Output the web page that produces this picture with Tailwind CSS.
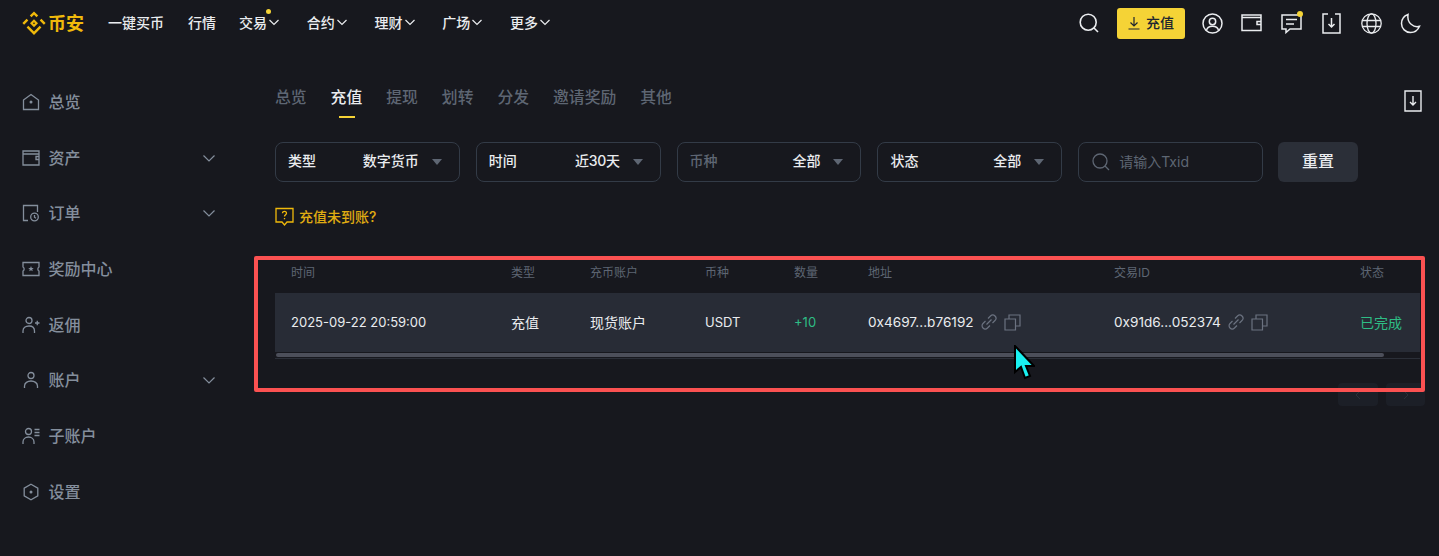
<!DOCTYPE html>
<html lang="zh-CN">
<head>
<meta charset="utf-8">
<title>充值记录</title>
<script src="https://cdn.jsdelivr.net/npm/@tailwindcss/browser@4"></script>
</head>
<body class="bg-[#17181e] font-['Inter','Noto_Sans_CJK_SC',sans-serif] overflow-hidden">
<div class="relative w-[1439px] h-[556px] overflow-hidden text-[#eaecef]">
  <!-- Header -->
  <header class="h-[46px] flex items-center pl-[22px] pr-[18px] text-[14px] font-medium">
    <div class="flex items-center w-[86px] shrink-0">
      <svg class="w-[24px] h-[24px]" viewBox="0 0 24 24" fill="#f0b90b"><path d="M12 0l4.200 4.200-1.700 1.700L12 3.400 9.500 5.900 7.800 4.200zM19.400 7.400L23.600 11.600 21.900 13.300 17.700 9.100zM4.600 7.400l1.700 1.700-4.200 4.200L.4 11.600zM12 7.800l4 4-4 4-4-4zm0 3l-1 1 1 1 1-1zM6.300 14.400l5.700 5.700 5.700-5.700 1.700 1.700L12 23.500l-7.400-7.400z" transform="translate(0 .4)"/></svg>
      <span class="ml-[2px] mt-[1px] text-[18px] font-bold text-[#f0b90b]">币安</span>
    </div>
    <nav class="flex items-center gap-[24px] mt-[-2px]">
      <a>一键买币</a><a class="mr-[-1px]">行情</a>
      <a class="relative flex items-center pr-[1.750px]">交易<svg class="w-[14px] h-[14px]" viewBox="0 0 14 14" fill="none" stroke="currentColor" stroke-width="1.200"><path d="M2.500 5l4.500 4.500L11.500 5"/></svg><span class="absolute left-[27px] top-[-3px] w-[5px] h-[5px] rounded-full bg-[#f5d336]"></span></a>
      <a class="flex items-center pr-[1.750px]">合约<svg class="w-[14px] h-[14px]" viewBox="0 0 14 14" fill="none" stroke="currentColor" stroke-width="1.200"><path d="M2.500 5l4.500 4.500L11.500 5"/></svg></a>
      <a class="flex items-center pr-[1.750px]">理财<svg class="w-[14px] h-[14px]" viewBox="0 0 14 14" fill="none" stroke="currentColor" stroke-width="1.200"><path d="M2.500 5l4.500 4.500L11.500 5"/></svg></a>
      <a class="flex items-center pr-[1.750px]">广场<svg class="w-[14px] h-[14px]" viewBox="0 0 14 14" fill="none" stroke="currentColor" stroke-width="1.200"><path d="M2.500 5l4.500 4.500L11.500 5"/></svg></a>
      <a class="flex items-center">更多<svg class="w-[14px] h-[14px]" viewBox="0 0 14 14" fill="none" stroke="currentColor" stroke-width="1.200"><path d="M2.500 5l4.500 4.500L11.500 5"/></svg></a>
    </nav>
    <div class="ml-auto flex items-center">
      <svg class="w-[20px] h-[20px]" viewBox="0 0 20 20" fill="none" stroke="#eaecef" stroke-width="1.600"><circle cx="9.200" cy="9.200" r="8"/><path d="M15 15l4 4"/></svg>
      <button class="ml-[18px] w-[68px] h-[31px] rounded-[3px] bg-[#f5d336] text-[#202630] text-[14px] font-medium flex items-center justify-center gap-[6px] pb-[1px]">
        <svg class="w-[12px] h-[14px]" viewBox="0 0 12 14" fill="none" stroke="#202630" stroke-width="1.200"><path d="M6 1v9M2.500 6.500L6 10l3.500-3.500M.5 13h11"/></svg>充值
      </button>
      <svg class="ml-[17px] w-[21px] h-[21px]" viewBox="0 0 21 21" fill="none" stroke="#eaecef" stroke-width="1.500"><circle cx="10.500" cy="10.500" r="9.500"/><circle cx="10.500" cy="8.500" r="3.200"/><path d="M4.500 17.500c.5-3 3-4.300 6-4.300s5.500 1.300 6 4.300"/></svg>
      <svg class="ml-[18px] w-[21px] h-[18px]" viewBox="0 0 21 18" fill="none" stroke="#eaecef" stroke-width="1.500"><path d="M1 3.500V16.500H20V1H1V3.500H20"/><path d="M20 7.500h-4v3h4" /></svg>
      <div class="relative ml-[19px] w-[21px] h-[21px]">
        <svg class="w-[21px] h-[21px]" viewBox="0 0 21 21" fill="none" stroke="#eaecef" stroke-width="1.500"><path d="M1 2h19v14h-11l-4 3.500V16H1zM5 6.500h11M5 11h8"/></svg>
        <span class="absolute right-[-1px] top-[-2px] w-[6px] h-[6px] rounded-full bg-[#f5d336]"></span>
      </div>
      <svg class="ml-[20px] w-[19px] h-[21px]" viewBox="0 0 19 21" fill="none" stroke="#eaecef" stroke-width="1.500"><path d="M6 1H1v19h17V1h-5M9.500 5v9M6.500 11l3 3 3-3"/></svg>
      <svg class="ml-[20px] w-[21px] h-[21px]" viewBox="0 0 21 21" fill="none" stroke="#eaecef" stroke-width="1.300"><circle cx="10.500" cy="10.500" r="9.700"/><ellipse cx="10.500" cy="10.500" rx="4.500" ry="9.700"/><path d="M1.500 7.500h18M1.500 13.500h18"/></svg>
      <svg class="ml-[18px] w-[21px] h-[21px]" viewBox="0 0 21 21" fill="none" stroke="#eaecef" stroke-width="1.500"><path d="M8 1.500C4 3 1.500 6.500 1.500 10.500c0 5 4 9 9 9 4 0 7.500-2.500 9-6.200-5.500 1.500-13-3-11.500-11.800z"/></svg>
    </div>
  </header>

  <div class="flex">
    <!-- Sidebar -->
    <aside class="w-[275px] shrink-0 pt-[28px] pl-[22px] pr-[59px] text-[16px] font-medium text-[#848e9c]">
      <div class="h-[55.700px] flex items-center"><svg class="w-[18px] h-[18px] mr-[8.500px]" viewBox="0 0 18 18" fill="none" stroke="currentColor" stroke-width="1.300"><path d="M1.500 7L9 1.500 16.500 7V16.500H1.500z"/><circle cx="9" cy="9" r="1.500" fill="currentColor" stroke="none"/></svg>总览</div>
      <div class="h-[55.700px] flex items-center"><svg class="w-[18px] h-[18px] mr-[8.500px]" viewBox="0 0 18 18" fill="none" stroke="currentColor" stroke-width="1.300"><path d="M1 3v13h16V2H1v3h16M17 7.500h-3v3h3"/></svg>资产<svg class="ml-auto w-[14px] h-[14px]" viewBox="0 0 14 14" fill="none" stroke="currentColor" stroke-width="1.200"><path d="M1.500 4.500L7 10l5.500-5.500"/></svg></div>
      <div class="h-[55.700px] flex items-center"><svg class="w-[18px] h-[18px] mr-[8.500px]" viewBox="0 0 18 18" fill="none" stroke="currentColor" stroke-width="1.300"><path d="M6 16.500H1.500V1.500H15.500V8"/><circle cx="12.500" cy="13" r="3.800"/><path d="M12.500 11v2.200l1.500 1"/></svg>订单<svg class="ml-auto w-[14px] h-[14px]" viewBox="0 0 14 14" fill="none" stroke="currentColor" stroke-width="1.200"><path d="M1.500 4.500L7 10l5.500-5.500"/></svg></div>
      <div class="h-[55.700px] flex items-center"><svg class="w-[18px] h-[18px] mr-[8.500px]" viewBox="0 0 18 18" fill="none" stroke="currentColor" stroke-width="1.300"><path d="M1 2.500h16V7c-1.500.5-1.500 3.500 0 4v4.500H1V11c1.500-.5 1.500-3.500 0-4z"/><path d="M9 6l.8 2h2l-1.600 1.300.6 2L9 10.200l-1.800 1.100.6-2L6.200 8h2z" fill="currentColor" stroke="none"/></svg>奖励中心</div>
      <div class="h-[55.700px] flex items-center"><svg class="w-[18px] h-[18px] mr-[8.500px]" viewBox="0 0 18 18" fill="none" stroke="currentColor" stroke-width="1.300"><circle cx="7" cy="4.500" r="3"/><path d="M1 17v-2c0-3 2.500-5 6-5s5.500 2 5.500 5v2M13 7h4.500M15.250 4.800v4.400"/></svg>返佣</div>
      <div class="h-[55.700px] flex items-center"><svg class="w-[18px] h-[18px] mr-[8.500px]" viewBox="0 0 18 18" fill="none" stroke="currentColor" stroke-width="1.300"><circle cx="9" cy="4.500" r="3"/><path d="M2.500 17v-2c0-3 3-5 6.500-5s6.500 2 6.500 5v2"/></svg>账户<svg class="ml-auto w-[14px] h-[14px]" viewBox="0 0 14 14" fill="none" stroke="currentColor" stroke-width="1.200"><path d="M1.500 4.500L7 10l5.500-5.500"/></svg></div>
      <div class="h-[55.700px] flex items-center"><svg class="w-[18px] h-[18px] mr-[8.500px]" viewBox="0 0 18 18" fill="none" stroke="currentColor" stroke-width="1.300"><circle cx="6.500" cy="4.500" r="3"/><path d="M1 17v-2c0-3 2.500-5 5.500-5s5.500 2 5.500 5v2M12.500 2.500h5M12.500 5.500h5M12.500 8.500h5"/></svg>子账户</div>
      <div class="h-[55.700px] flex items-center"><svg class="w-[18px] h-[18px] mr-[8.500px]" viewBox="0 0 18 18" fill="none" stroke="currentColor" stroke-width="1.300"><path d="M9 1.200l6.800 3.900v7.800L9 16.800l-6.800-3.900V5.100z"/><circle cx="9" cy="9" r="1.500" fill="currentColor" stroke="none"/></svg>设置</div>
    </aside>

    <!-- Main -->
    <main class="flex-1 min-w-0 pr-[19px]">
      <div class="relative flex items-start gap-[24px] pt-[40px] h-[96px] text-[15.800px] font-medium text-[#5e6673]">
        <span>总览</span>
        <span class="relative text-[#eaecef]">充值<span class="absolute left-[8px] top-[30px] w-[16px] h-[2px] bg-[#f5d336]"></span></span>
        <span>提现</span><span>划转</span><span>分发</span><span>邀请奖励</span><span>其他</span>
        <svg class="absolute right-[-2px] top-[44px] w-[18px] h-[22px]" viewBox="0 0 18 22" fill="none" stroke="#eaecef" stroke-width="1.400"><path d="M1 1h16v20H1zM9 6v9M6 12l3 3 3-3"/></svg>
      </div>
      <div class="flex items-center gap-[16px] text-[14px] font-medium">
        <div class="w-[184.800px] h-[40px] rounded-[8px] border border-[#333b47] flex items-center px-[12px] pb-[3px]"><span>类型</span><span class="ml-auto">数字货币</span><span class="ml-[13px] mr-[5px] mt-[3px] w-0 h-0 border-x-[5px] border-x-transparent border-t-[6px] border-t-[#5e6673]"></span></div>
        <div class="w-[184.800px] h-[40px] rounded-[8px] border border-[#333b47] flex items-center px-[12px] pb-[3px]"><span>时间</span><span class="ml-auto tracking-[-0.3px]">近30天</span><span class="ml-[13px] mr-[5px] mt-[3px] w-0 h-0 border-x-[5px] border-x-transparent border-t-[6px] border-t-[#5e6673]"></span></div>
        <div class="w-[184.800px] h-[40px] rounded-[8px] border border-[#333b47] flex items-center px-[12px] pb-[3px]"><span class="text-[#5e6673]">币种</span><span class="ml-auto">全部</span><span class="ml-[13px] mr-[5px] mt-[3px] w-0 h-0 border-x-[5px] border-x-transparent border-t-[6px] border-t-[#5e6673]"></span></div>
        <div class="w-[184.800px] h-[40px] rounded-[8px] border border-[#333b47] flex items-center px-[12px] pb-[3px]"><span>状态</span><span class="ml-auto">全部</span><span class="ml-[13px] mr-[5px] mt-[3px] w-0 h-0 border-x-[5px] border-x-transparent border-t-[6px] border-t-[#5e6673]"></span></div>
        <div class="w-[184.800px] h-[40px] rounded-[8px] border border-[#333b47] flex items-center px-[13px] text-[#5e6673] font-normal pb-[2px]"><svg class="w-[18px] h-[18px] mr-[9px] mt-[2px]" viewBox="0 0 18 18" fill="none" stroke="#5e6673" stroke-width="1.300"><circle cx="8" cy="8" r="7"/><path d="M13 13l4 4"/></svg>请输入Txid</div>
        <button class="ml-[-1px] w-[80px] h-[40px] rounded-[6px] bg-[#2b2f38] text-[16px] font-medium pb-[3px]">重置</button>
      </div>
      <div class="mt-[23px] flex items-center gap-[5px] text-[14px] font-medium text-[#e0ac12] h-[22px]">
        <svg class="w-[19px] h-[19px]" viewBox="0 0 19 19" fill="none" stroke="#f0b90b" stroke-width="1.300"><path d="M1 1.500h17V15h-6l-2.500 3L7 15H1z"/><path d="M7.500 6.200c0-2.500 4-2.500 4 0 0 1.600-2 1.500-2 3.300M9.500 11v1.300"/></svg>
        充值未到账?
      </div>
      <!-- Table -->
      <div class="mt-[30px] text-[13px]">
        <div class="grid grid-cols-[220px_79px_115px_89px_74px_246px_246px_60px] h-[36px] items-start pt-[7px] pl-[16px] text-[12px] text-[#5e6673]">
          <span>时间</span><span>类型</span><span>充币账户</span><span>币种</span><span>数量</span><span>地址</span><span>交易ID</span><span>状态</span>
        </div>
        <div class="grid grid-cols-[220px_79px_115px_89px_74px_246px_246px_60px] h-[59px] items-center pl-[16px] bg-[#282c36] text-[#eaecef]">
          <span>2025-09-22 20:59:00</span><span class="text-[14px]">充值</span><span class="text-[14px]">现货账户</span><span>USDT</span><span class="text-[#2ebd85]">+10</span>
          <span class="flex items-center text-[13.600px]">0x4697...b76192
            <svg class="ml-[7px] w-[16px] h-[16px]" viewBox="0 0 16 16" fill="none" stroke="#6b7280" stroke-width="1.200"><path d="M7 4.500l2.500-2.500a3 3 0 014.500 4.500L11.500 9M9 11.500L6.500 14A3 3 0 012 9.500L4.500 7M5.500 10.500l5-5"/></svg>
            <svg class="ml-[7px] w-[17px] h-[17px]" viewBox="0 0 17 17" fill="none" stroke="#6b7280" stroke-width="1.200"><path d="M1 5h10.500v11H1zM5 5V1h11v11h-4.500"/></svg></span>
          <span class="flex items-center text-[13.600px]">0x91d6...052374
            <svg class="ml-[7px] w-[16px] h-[16px]" viewBox="0 0 16 16" fill="none" stroke="#6b7280" stroke-width="1.200"><path d="M7 4.500l2.500-2.500a3 3 0 014.500 4.500L11.500 9M9 11.500L6.500 14A3 3 0 012 9.500L4.500 7M5.500 10.500l5-5"/></svg>
            <svg class="ml-[7px] w-[17px] h-[17px]" viewBox="0 0 17 17" fill="none" stroke="#6b7280" stroke-width="1.200"><path d="M1 5h10.500v11H1zM5 5V1h11v11h-4.500"/></svg></span>
          <span class="text-[#2ebd85] text-[14px]">已完成</span>
        </div>
        <div class="h-[7px] border-b border-b-[#2b2f38] pt-[1px]"><div class="ml-[1px] w-[1108px] h-[4px] rounded-full bg-[#4c4f5a]"></div></div>
      </div>
      <div class="mt-[24px] flex justify-end gap-[8px] mr-[-5px]">
        <div class="w-[40px] h-[23px] rounded-[4px] bg-[#1c1f27] flex items-center justify-center text-[#2b2f38]"><svg class="w-[8px] h-[10px]" viewBox="0 0 8 10" fill="none" stroke="currentColor"><path d="M6 1L2 5l4 4"/></svg></div>
        <div class="w-[39px] h-[23px] rounded-[4px] bg-[#1c1f27] flex items-center justify-center text-[#2b2f38]"><svg class="w-[8px] h-[10px]" viewBox="0 0 8 10" fill="none" stroke="currentColor"><path d="M2 1l4 4-4 4"/></svg></div>
      </div>
    </main>
  </div>

  <!-- Annotation overlay -->
  <div class="absolute left-[254px] top-[256px] w-[1171px] h-[136px] border-[4px] border-[#fb5151] rounded-[2px]"></div>
  <svg class="absolute left-[1013px] top-[345px] w-[22px] h-[36px]" viewBox="0 0 22 36"><path d="M2 1v26l6-5 4 11 5-2-4-10h8z" fill="#19f0f0" stroke="#000" stroke-width="2"/></svg>
</div>
</body>
</html>
